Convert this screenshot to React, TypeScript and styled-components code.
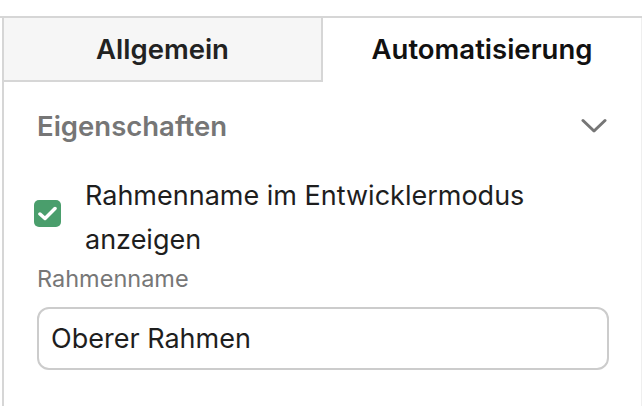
import React, { useState } from 'react'
import styled, { createGlobalStyle } from 'styled-components'

const GlobalStyle = createGlobalStyle`
  html, body {
    margin: 0;
    padding: 0;
    background: #ffffff;
    font-family: Inter, 'Noto Sans', 'Liberation Sans', sans-serif;
  }
`

const Frame = styled.div`
  margin-top: 16px;
  border-top: 2px solid #d6d6d6;
  padding-left: 2px;
  height: 390px;
  box-sizing: border-box;
`

const Panel = styled.div`
  height: 100%;
  border-left: 2px solid #d6d6d6;
  border-right: 1px solid #efefef;
  box-sizing: border-box;
`

const Tabs = styled.div`
  display: grid;
  grid-template-columns: 319px 1fr;
`

const Tab = styled.button<{ $active?: boolean }>`
  height: 64px;
  border: none;
  border-right: ${(p) => (p.$active ? 'none' : '2px solid #d6d6d6')};
  border-bottom: ${(p) => (p.$active ? '2px solid transparent' : '2px solid #d6d6d6')};
  background: ${(p) => (p.$active ? '#ffffff' : '#f6f6f6')};
  color: ${(p) => (p.$active ? '#111111' : '#222222')};
  font-family: inherit;
  font-size: 27.5px;
  font-weight: 600;
  padding: 0;
  cursor: pointer;
`

const Content = styled.div`
  padding: 0 34px 0 33px;
`

const SectionHeader = styled.div`
  display: flex;
  align-items: center;
  justify-content: space-between;
  height: 88px;
`

const SectionTitle = styled.div`
  color: #767676;
  font-size: 27.5px;
  font-weight: 600;
`

const CheckRow = styled.label`
  display: flex;
  align-items: center;
  gap: 24px;
  margin-top: 4px;
  margin-left: -3px;
`

const CheckBox = styled.span`
  flex: none;
  width: 27px;
  height: 27px;
  margin-top: -10px;
  border-radius: 5px;
  background: #4a9e6c;
  display: flex;
  align-items: center;
  justify-content: center;
`

const CheckText = styled.span`
  color: #1e1e1e;
  font-size: 27px;
  line-height: 44px;
`

const FieldLabel = styled.div`
  color: #777777;
  font-size: 23.5px;
  margin-top: 2px;
`

const Input = styled.input`
  display: block;
  box-sizing: border-box;
  width: 572px;
  height: 63px;
  margin-top: 14px;
  border: 2px solid #cccccc;
  border-radius: 12px;
  padding: 0 12px;
  font-family: inherit;
  font-size: 27px;
  color: #1e1e1e;
  outline: none;
`

const Chevron = () => (
  <svg width="26" height="16" viewBox="0 0 26 16" fill="none">
    <path d="M2 2.5 L13 13 L24 2.5" stroke="#767676" strokeWidth="3" strokeLinecap="round" strokeLinejoin="round" />
  </svg>
)

const Check = () => (
  <svg width="19" height="15" viewBox="0 0 19 15" fill="none">
    <path d="M2 8 L7 12.5 L17 2.5" stroke="#ffffff" strokeWidth="3.5" strokeLinecap="round" strokeLinejoin="round" />
  </svg>
)

export default function App() {
  const [tab, setTab] = useState(1)
  const [name, setName] = useState('Oberer Rahmen')

  return (
    <>
      <GlobalStyle />
      <Frame>
        <Panel>
          <Tabs>
            <Tab $active={tab === 0} onClick={() => setTab(0)}>Allgemein</Tab>
            <Tab $active={tab === 1} onClick={() => setTab(1)}>Automatisierung</Tab>
          </Tabs>
          <Content>
            <SectionHeader>
              <SectionTitle>Eigenschaften</SectionTitle>
              <Chevron />
            </SectionHeader>
            <CheckRow>
              <CheckBox>
                <Check />
              </CheckBox>
              <CheckText>Rahmenname im Entwicklermodus anzeigen</CheckText>
            </CheckRow>
            <FieldLabel>Rahmenname</FieldLabel>
            <Input value={name} onChange={(e) => setName(e.target.value)} />
          </Content>
        </Panel>
      </Frame>
    </>
  )
}
